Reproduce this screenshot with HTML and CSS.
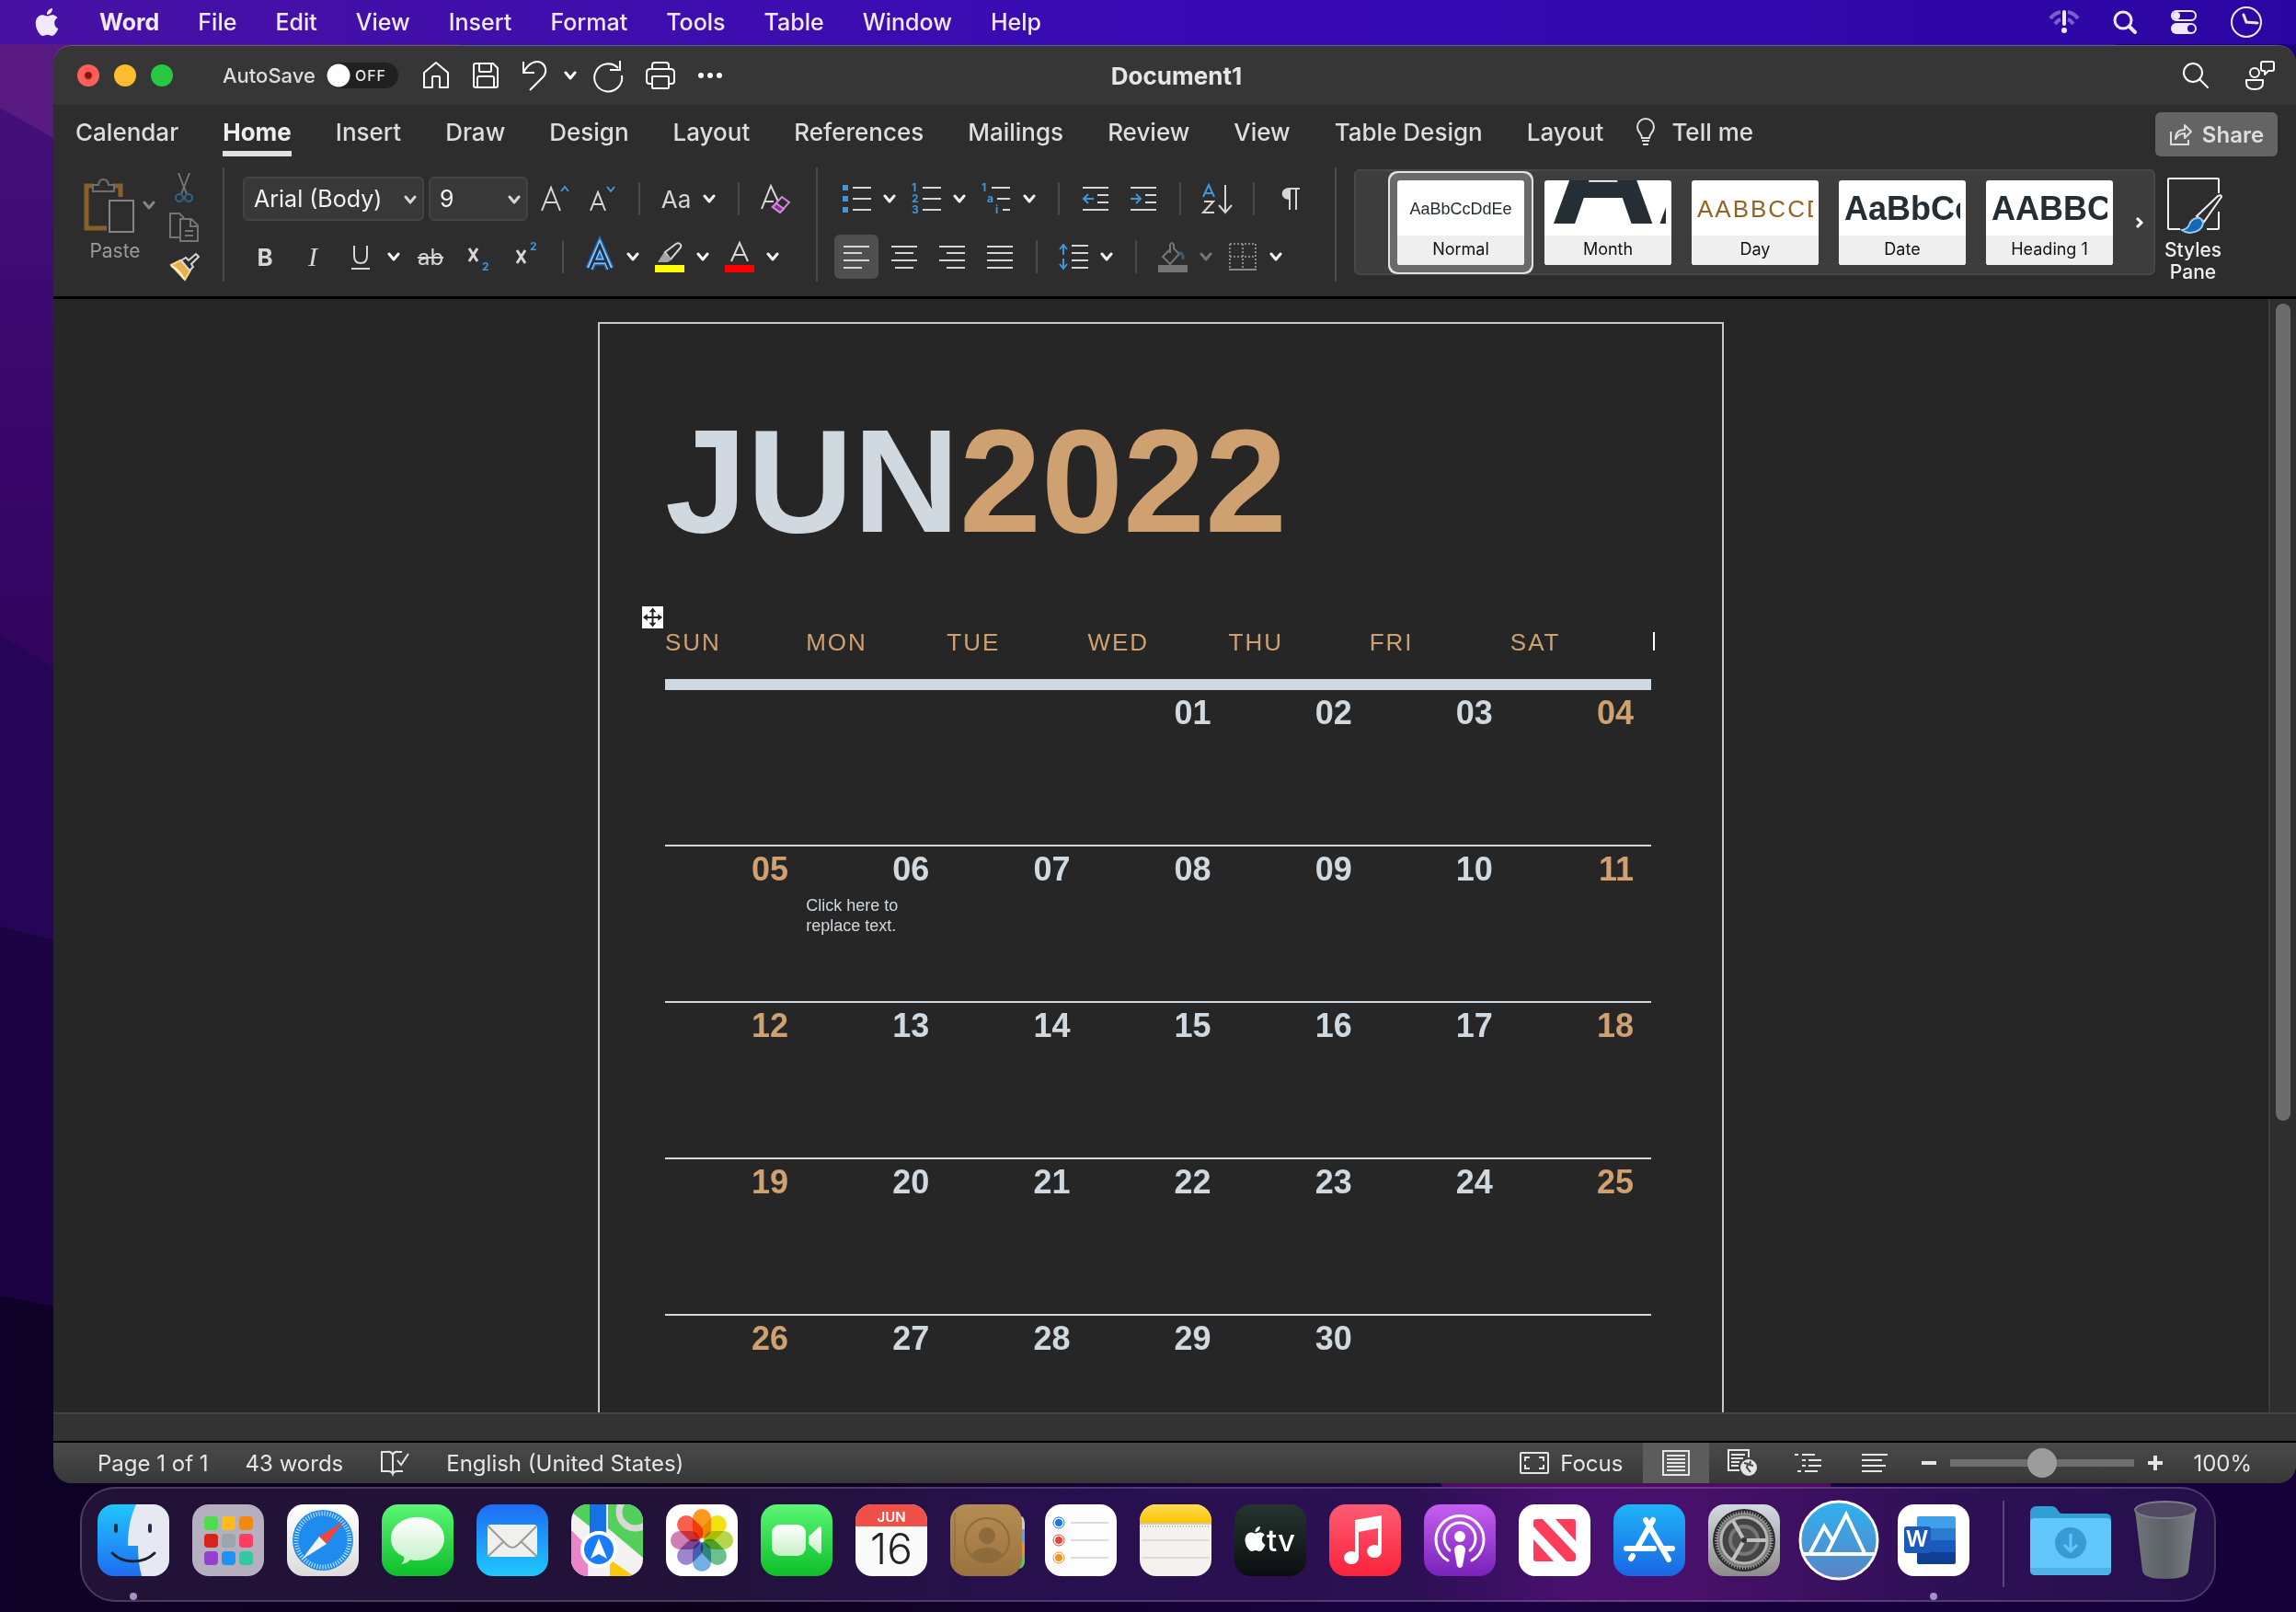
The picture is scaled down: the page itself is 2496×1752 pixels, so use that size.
FILE: index.html
```html
<!DOCTYPE html>
<html lang="en">
<head>
    <meta charset="UTF-8">
    <meta name="viewport" content="width=device-width, initial-scale=1.0">
    <title>Document1</title>
    <link rel="stylesheet" href="styles.css">
</head>
<body>
    <svg class="defs" width="0" height="0" aria-hidden="true">
        <symbol id="apple" viewBox="0 0 24 24"><path d="M12.152 6.896c-.948 0-2.415-1.078-3.96-1.04-2.04.027-3.91 1.183-4.961 3.014-2.117 3.675-.546 9.103 1.519 12.09 1.013 1.454 2.208 3.09 3.792 3.039 1.52-.065 2.09-.987 3.935-.987 1.831 0 2.35.987 3.96.948 1.637-.026 2.676-1.48 3.676-2.948 1.156-1.688 1.636-3.325 1.662-3.415-.039-.013-3.182-1.221-3.22-4.857-.026-3.04 2.48-4.494 2.597-4.559-1.429-2.09-3.623-2.324-4.39-2.376-2-.156-3.675 1.09-4.61 1.09zM15.53 3.83c.843-1.012 1.4-2.427 1.245-3.83-1.207.052-2.662.805-3.532 1.818-.78.896-1.454 2.338-1.273 3.714 1.338.104 2.715-.688 3.559-1.701"/></symbol>
        <symbol id="chev" viewBox="0 0 14 10"><path d="M2 2l5 6 5-6" fill="none" stroke="currentColor" stroke-width="3" stroke-linecap="round" stroke-linejoin="round"/></symbol>
        <linearGradient id="gBlue" x2="0" y2="1"><stop stop-color="#1fc6fd"/><stop offset="1" stop-color="#1f6df2"/></linearGradient>
        <linearGradient id="gMail" x2="0" y2="1"><stop stop-color="#1e6cf3"/><stop offset="1" stop-color="#1fc8fc"/></linearGradient>
        <linearGradient id="gStore" x2="0" y2="1"><stop stop-color="#1fb4f8"/><stop offset="1" stop-color="#1a66e4"/></linearGradient>
        <linearGradient id="gGreen" x2="0" y2="1"><stop stop-color="#5bf675"/><stop offset="1" stop-color="#0dbe29"/></linearGradient>
        <linearGradient id="gWhite" x2="0" y2="1"><stop stop-color="#ffffff"/><stop offset="1" stop-color="#dedcda"/></linearGradient>
        <linearGradient id="gBubble" x2="0" y2="1"><stop stop-color="#ffffff"/><stop offset="1" stop-color="#c4f0c6"/></linearGradient>
        <linearGradient id="gMusic" x2="0" y2="1"><stop stop-color="#fb5c74"/><stop offset="1" stop-color="#fa233b"/></linearGradient>
        <linearGradient id="gPod" x2="0" y2="1"><stop stop-color="#c65ff0"/><stop offset="1" stop-color="#7722ba"/></linearGradient>
        <linearGradient id="gTv" x2="0" y2="1"><stop stop-color="#25352f"/><stop offset="1" stop-color="#0b0e10"/></linearGradient>
        <linearGradient id="gBook" x2="0" y2="1"><stop stop-color="#b58d52"/><stop offset="1" stop-color="#9c723f"/></linearGradient>
        <linearGradient id="gNote" x2="0" y2="1"><stop stop-color="#fedc52"/><stop offset="1" stop-color="#fcc402"/></linearGradient>
        <linearGradient id="gGear" x2="0" y2="1"><stop stop-color="#d3dae2"/><stop offset="1" stop-color="#8f8c89"/></linearGradient>
        <linearGradient id="gPeak" x2="0" y2="1"><stop stop-color="#2fb2ef"/><stop offset="1" stop-color="#5b83c4"/></linearGradient>
        <linearGradient id="gTrash"><stop stop-color="#6e7478"/><stop offset=".5" stop-color="#5b6165"/><stop offset="1" stop-color="#7b8185"/></linearGradient>
        <clipPath id="tile"><rect width="78" height="78" rx="18"/></clipPath>
        <clipPath id="disc"><circle cx="39" cy="39" r="41"/></clipPath>
    </svg>

    <svg class="wallpaper" viewBox="0 0 2496 1752" preserveAspectRatio="none" aria-hidden="true">
        <defs>
            <linearGradient id="w1" x2="0" y2="1"><stop stop-color="#43107a"/><stop offset=".5" stop-color="#3a076c"/><stop offset="1" stop-color="#30045c"/></linearGradient>
            <linearGradient id="w2" x2="1" y2="0"><stop stop-color="#0e0127"/><stop offset=".3" stop-color="#0c0119"/><stop offset=".6" stop-color="#190240"/><stop offset="1" stop-color="#150038"/></linearGradient>
        </defs>
        <rect width="2496" height="160" fill="#591a82"/>
        <path d="M500 0h1996v110H500z" fill="#3013b4"/>
        <path d="M2300 0h196v1752h-196z" fill="#1d0579"/>
        <path d="M0 117l60 34V760H0z" fill="url(#w1)"/>
        <path d="M0 690l60 37v300H0z" fill="#260559"/>
        <path d="M0 1007l60 15v410H0z" fill="#1b0243"/>
        <path d="M0 1408l60 12h2436v332H0z" fill="url(#w2)"/>
        <path d="M1560 1600h430v20H1570z" fill="#4a0c66"/>
    </svg>

    <header class="menubar">
        <nav class="menus">
            <a href="#" class="apple" aria-label="Apple"><svg width="30" height="32"><use href="#apple"/></svg></a>
            <a href="#" class="app-name">Word</a>
            <a href="#">File</a>
            <a href="#">Edit</a>
            <a href="#">View</a>
            <a href="#">Insert</a>
            <a href="#">Format</a>
            <a href="#">Tools</a>
            <a href="#">Table</a>
            <a href="#">Window</a>
            <a href="#">Help</a>
        </nav>
        <div class="status-icons">
            <svg width="34" height="28" viewBox="0 0 34 28"><g stroke-width="4" opacity=".4"><path d="M2 10Q7 4 13 3M21 3q6 1 11 7"/><path d="M7 16q3-4 6-5M21 11q3 1 6 5"/></g><path d="M17 3v13" stroke-width="4" stroke-linecap="round"/><circle cx="17" cy="23" r="3" fill="currentColor" stroke="none"/></svg>
            <svg width="28" height="28" viewBox="0 0 28 28"><circle cx="12" cy="12" r="9" stroke-width="3"/><path d="M19 19l6 6" stroke-width="4" stroke-linecap="round"/></svg>
            <svg width="30" height="28" viewBox="0 0 30 28"><rect x="2" y="2" width="26" height="10" rx="5"/><circle cx="7" cy="7" r="4" fill="currentColor" stroke="none"/><rect x="1" y="15" width="28" height="12" rx="6" fill="currentColor" stroke="none"/><circle cx="23" cy="21" r="4" fill="#2f08a6" stroke="none"/></svg>
            <svg width="36" height="36" viewBox="0 0 36 36"><circle cx="18" cy="18" r="16"/><path d="M15 10l3 8 12 1" stroke-width="3" stroke-linecap="round"/></svg>
        </div>
    </header>

    <main class="window">
        <div class="titlebar">
            <div class="title-left">
                <div class="lights">
                    <button class="light close" aria-label="Close"></button>
                    <button class="light minimize" aria-label="Minimize"></button>
                    <button class="light zoom" aria-label="Zoom"></button>
                </div>
                <label class="autosave" for="autosave">AutoSave</label>
                <span class="switch"><input type="checkbox" id="autosave"><span class="switch-text">OFF</span></span>
                <div class="quick">
                    <button aria-label="Home"><svg width="32" height="34" viewBox="0 0 32 34"><path d="M3 14L16 3l13 11v16H20V19q0-1-1-1h-6q-1 0-1 1v11H3z" stroke-linejoin="round"/></svg></button>
                    <button aria-label="Save"><svg width="30" height="30" viewBox="0 0 30 30"><path d="M2 4q0-2 2-2h19l5 5v19q0 2-2 2H4q-2 0-2-2zM8 2v8q0 1 1 1h11q1 0 1-1V2M6 28V18q0-2 2-2h14q2 0 2 2v10"/></svg></button>
                    <button aria-label="Undo"><svg width="30" height="36" viewBox="0 0 30 36"><path d="M3 3v12h12M3 15C8 5 16 1 22 4c6 3 7 11 2 16L10 34"/></svg></button>
                    <button class="undo-more" aria-label="Undo options"><svg width="14" height="10"><use href="#chev"/></svg></button>
                    <button aria-label="Redo"><svg width="34" height="36" viewBox="0 0 34 36"><path d="M28 10a15 15 0 1 0 4 8M30 2v10H19"/></svg></button>
                    <button aria-label="Print"><svg width="34" height="32" viewBox="0 0 34 32"><path d="M8 9V5q0-3 3-3h12q3 0 3 3v4M8 25H5q-3 0-3-3V13q0-4 4-4h22q4 0 4 4v9q0 3-3 3h-3"/><rect x="8" y="17" width="18" height="13" rx="1"/></svg></button>
                    <button aria-label="More"><svg width="28" height="6" viewBox="0 0 28 6"><g fill="currentColor" stroke="none"><circle cx="4" cy="3" r="3"/><circle cx="14" cy="3" r="3"/><circle cx="24" cy="3" r="3"/></g></svg></button>
                </div>
            </div>
            <h2 class="doc-title">Document1</h2>
            <div class="title-right">
                <button aria-label="Search"><svg width="30" height="30" viewBox="0 0 30 30"><circle cx="12" cy="12" r="10"/><path d="M19 19l9 9" stroke-linecap="round"/></svg></button>
                <button aria-label="Presence"><svg width="34" height="34" viewBox="0 0 34 34"><circle cx="11" cy="14" r="5"/><path d="M2 22h18v3q0 7-9 7t-9-7zM20 2h10q2 0 2 2v6q0 2-2 2h-4l-4 4v-4h-2q-2 0-2-2V4q0-2 2-2z" stroke-linejoin="round"/></svg></button>
            </div>
        </div>

        <div class="tabs">
            <button class="tab">Calendar</button>
            <button class="tab active">Home</button>
            <button class="tab">Insert</button>
            <button class="tab">Draw</button>
            <button class="tab">Design</button>
            <button class="tab">Layout</button>
            <button class="tab">References</button>
            <button class="tab">Mailings</button>
            <button class="tab">Review</button>
            <button class="tab">View</button>
            <button class="tab">Table Design</button>
            <button class="tab">Layout</button>
            <button class="tab tell"><svg width="20" height="30" viewBox="0 0 20 30"><path d="M6 22c0-5-5-6-5-12a9 9 0 0 1 18 0c0 6-5 7-5 12zM6 25h8M7 29h6"/></svg>Tell me</button>
            <button class="share"><svg width="26" height="26" viewBox="0 0 26 26"><path d="M2 10v14h19v-5M7 18c0-7 4-10 10-10V3l7 7-7 7v-5c-5 0-8 2-10 6z" stroke-linejoin="round"/></svg>Share</button>
        </div>

        <div class="ribbon">
            <div class="clipboard">
                <button class="paste">
                    <span class="paste-icon">
                        <svg width="54" height="62" viewBox="0 0 54 62"><path d="M24 56H2V10h7M31 10h8v12" stroke="#8a5f2c" stroke-width="5"/><path d="M9 16V9h6c1-8 10-8 11 0h6v7z" stroke="#6f6f6f"/><path d="M27 26h26v34H27z" stroke="#858585"/></svg>
                        <svg width="14" height="10"><use href="#chev"/></svg>
                    </span>
                    <span class="paste-label">Paste</span>
                </button>
                <div class="clip-tools">
                    <button class="dim" aria-label="Cut"><svg width="22" height="34" viewBox="0 0 22 34"><path d="M5 2l9 23M17 2L8 25"/><g stroke="#31658c"><circle cx="6" cy="29" r="4"/><circle cx="16" cy="29" r="4"/></g></svg></button>
                    <button class="dim" aria-label="Copy"><svg width="34" height="34" viewBox="0 0 34 34"><path d="M12 28H2V2h10l5 5M13 8h12l7 7v17H13zM24 8v8h8M18 21h9M18 26h9"/></svg></button>
                    <button aria-label="Format painter"><svg width="34" height="32" viewBox="0 0 34 32"><path d="M3 14l10-5 11 11-6 10z" fill="#e9b04a" stroke="#f6d48a"/><path d="M3 15q8 3 14 14" stroke="#fff3d0"/><path d="M14 9l5-3 3 3 8-7 3 3-8 8 2 3-4 4z" fill="#2d2d2d"/></svg></button>
                </div>
            </div>

            <div class="group font-group">
                <div class="row">
                    <span class="drop drop-font"><select aria-label="Font"><option>Arial (Body)</option></select><svg width="14" height="10"><use href="#chev"/></svg></span>
                    <span class="drop drop-size"><select aria-label="Font size"><option>9</option></select><svg width="14" height="10"><use href="#chev"/></svg></span>
                    <button class="tool" aria-label="Grow font"><svg width="32" height="32" viewBox="0 0 32 32"><path d="M2 29L12 4l10 25M6 20h12"/><path d="M23 8l4-5 4 5" class="blue"/></svg></button>
                    <button class="tool" aria-label="Shrink font"><svg width="30" height="32" viewBox="0 0 30 32"><path d="M2 29L10 9l8 20M5 22h10"/><path d="M20 3l4 5 4-5" class="blue"/></svg></button>
                    <i class="sep"></i>
                    <button class="tool case">Aa</button>
                    <button class="chev" aria-label="Change case"><svg width="14" height="10"><use href="#chev"/></svg></button>
                    <i class="sep"></i>
                    <button class="tool" aria-label="Clear formatting"><svg width="34" height="34" viewBox="0 0 34 34"><path d="M2 28L12 3l8 17M6 20h9"/><path d="M14 26l10-11 8 6-10 11z" fill="#2d2d2d" stroke="#d08ad8"/><path d="M14 26l4-4 8 6-4 4z" fill="#8a2f96" stroke="#d08ad8"/></svg></button>
                </div>
                <div class="row row-pad">
                    <button class="tool bold">B</button>
                    <button class="tool italic">I</button>
                    <button class="tool" aria-label="Underline"><svg width="24" height="28" viewBox="0 0 24 28"><path d="M5 2v11q0 8 7 8t7-8V2M2 27h20"/></svg></button>
                    <button class="chev" aria-label="Underline style"><svg width="14" height="10"><use href="#chev"/></svg></button>
                    <button class="tool strike">ab</button>
                    <button class="tool" aria-label="Subscript"><svg width="26" height="32" viewBox="0 0 26 32"><path d="M3 7l9 14M12 7L3 21" stroke-width="3"/><text x="17" y="31" class="num">2</text></svg></button>
                    <button class="tool" aria-label="Superscript"><svg width="26" height="32" viewBox="0 0 26 32"><path d="M3 9l9 14M12 9L3 23" stroke-width="3"/><text x="17" y="9" class="num">2</text></svg></button>
                    <i class="sep"></i>
                    <button class="tool" aria-label="Text effects"><svg width="32" height="32" viewBox="0 0 32 32"><path d="M5 29L16 4l11 25M9 21h14" stroke="#1f6fc0" stroke-width="9"/><path d="M5 29L16 4l11 25M9 21h14" stroke="#8cc6f4" stroke-width="6"/><path d="M5 30L16 4l11 26M9 21h14" stroke="#1b3550" stroke-width="3"/></svg></button>
                    <button class="chev" aria-label="Text effect options"><svg width="14" height="10"><use href="#chev"/></svg></button>
                    <button class="tool" aria-label="Highlight"><svg width="34" height="34" viewBox="0 0 34 34"><path d="M12 12L24 3q3-2 5 1 1 2-1 4L18 20z" stroke-width="2"/><path d="M11 12l8 8-4 3H4z" fill="#a5a5a5" stroke="none"/><path d="M1 26h32v8H1z" fill="#ffff00" stroke="none"/></svg></button>
                    <button class="chev" aria-label="Highlight colour"><svg width="14" height="10"><use href="#chev"/></svg></button>
                    <button class="tool" aria-label="Font colour"><svg width="34" height="34" viewBox="0 0 34 34"><path d="M8 22L17 2l9 20M11 15h12"/><path d="M1 26h32v8H1z" fill="#ff0000" stroke="none"/></svg></button>
                    <button class="chev" aria-label="Font colour options"><svg width="14" height="10"><use href="#chev"/></svg></button>
                </div>
            </div>

            <div class="group para-group">
                <div class="row">
                    <button class="tool" aria-label="Bullets"><svg width="32" height="32" viewBox="0 0 32 32"><path d="M12 4h20M12 16h20M12 28h20"/><path d="M1 1h6v6H1zM1 13h6v6H1zM1 25h6v6H1z" fill="#3f97d9" stroke="none"/></svg></button>
                    <button class="chev" aria-label="Bullet options"><svg width="14" height="10"><use href="#chev"/></svg></button>
                    <button class="tool" aria-label="Numbering"><svg width="32" height="32" viewBox="0 0 32 32"><path d="M12 4h20M12 16h20M12 28h20"/><text x="0" y="8" class="num">1</text><text x="0" y="20" class="num">2</text><text x="0" y="32" class="num">3</text></svg></button>
                    <button class="chev" aria-label="Number options"><svg width="14" height="10"><use href="#chev"/></svg></button>
                    <button class="tool" aria-label="Multilevel list"><svg width="32" height="32" viewBox="0 0 32 32"><path d="M11 4h20M17 16h14M23 28h8"/><text x="0" y="8" class="num">1</text><text x="6" y="20" class="num">a</text><text x="15" y="32" class="num">i</text></svg></button>
                    <button class="chev" aria-label="Multilevel options"><svg width="14" height="10"><use href="#chev"/></svg></button>
                    <i class="sep"></i>
                    <button class="tool" aria-label="Decrease indent"><svg width="30" height="28" viewBox="0 0 30 28"><path d="M1 2h28M17 10h12M17 18h12M1 26h28"/><path d="M13 14H2M7 9l-5 5 5 5" class="blue"/></svg></button>
                    <button class="tool" aria-label="Increase indent"><svg width="30" height="28" viewBox="0 0 30 28"><path d="M1 2h28M17 10h12M17 18h12M1 26h28"/><path d="M1 14h11M7 9l5 5-5 5" class="blue"/></svg></button>
                    <i class="sep"></i>
                    <button class="tool" aria-label="Sort"><svg width="34" height="34" viewBox="0 0 34 34"><path d="M2 15L8 2l6 13M4 11h8" class="blue"/><path d="M3 20h10L2 32h12M26 2v29M19 24l7 8 7-8"/></svg></button>
                    <i class="sep"></i>
                    <button class="tool" aria-label="Show marks"><svg width="22" height="26" viewBox="0 0 22 26"><path d="M9 2h12M10 2v23M17 2v23"/><path d="M10 1C-1 1-1 14 10 14z" fill="currentColor" stroke="none"/></svg></button>
                </div>
                <div class="row">
                    <button class="tool selected" aria-label="Align left"><svg width="28" height="28" viewBox="0 0 28 28"><path d="M0 3h28M0 10h20M0 18h28M0 26h20"/></svg></button>
                    <button class="tool" aria-label="Align center"><svg width="28" height="28" viewBox="0 0 28 28"><path d="M0 3h28M4 10h20M0 18h28M4 26h20"/></svg></button>
                    <button class="tool" aria-label="Align right"><svg width="28" height="28" viewBox="0 0 28 28"><path d="M0 3h28M8 10h20M0 18h28M8 26h20"/></svg></button>
                    <button class="tool" aria-label="Justify"><svg width="28" height="28" viewBox="0 0 28 28"><path d="M0 3h28M0 10h28M0 18h28M0 26h28"/></svg></button>
                    <i class="sep"></i>
                    <button class="tool" aria-label="Line spacing"><svg width="34" height="30" viewBox="0 0 34 30"><path d="M15 3h18M15 11h18M15 19h18M15 27h18"/><path d="M6 13V3M2 7l4-5 4 5M6 17v11M2 23l4 5 4-5" class="blue"/></svg></button>
                    <button class="chev" aria-label="Spacing options"><svg width="14" height="10"><use href="#chev"/></svg></button>
                    <i class="sep"></i>
                    <button class="tool dim" aria-label="Shading"><svg width="34" height="34" viewBox="0 0 34 34"><path d="M14 9L6 17l8 8 10-11-6-6V4q-2-4-4 0v9"/><path d="M24 12q5 2 4 8" stroke="#3c5a72" stroke-width="3"/><path d="M1 26h32v8H1z" fill="#757575" stroke="none"/></svg></button>
                    <button class="chev dim" aria-label="Shading options"><svg width="14" height="10"><use href="#chev"/></svg></button>
                    <button class="tool borders" aria-label="Borders"><svg width="30" height="32" viewBox="0 0 30 32"><path d="M1 2h28M1 16h28M1 2v27M15 2v27M29 2v27" stroke-dasharray="2 2"/><path d="M0 30h30"/></svg></button>
                    <button class="chev" aria-label="Border options"><svg width="14" height="10"><use href="#chev"/></svg></button>
                </div>
            </div>

            <div class="group style-group">
                <div class="gallery">
                    <button class="card current"><span class="preview p-normal">AaBbCcDdEe</span><span class="card-name">Normal</span></button>
                    <button class="card"><span class="preview p-month">AA</span><span class="card-name">Month</span></button>
                    <button class="card"><span class="preview p-day">AABBCCD</span><span class="card-name">Day</span></button>
                    <button class="card"><span class="preview p-date">AaBbCc</span><span class="card-name">Date</span></button>
                    <button class="card"><span class="preview p-date">AABBC</span><span class="card-name">Heading 1</span></button>
                    <button class="more" aria-label="More styles"><svg width="10" height="14" viewBox="0 0 10 14"><path d="M2 2l5 5-5 5" stroke-width="3"/></svg></button>
                </div>
                <button class="styles-pane"><svg width="62" height="62" viewBox="0 0 62 62"><path d="M15 57H3q-1 0-1-1V3q0-1 1-1h53q1 0 1 1v15M57 38v18q0 1-1 1H44" stroke-width="2"/><path d="M33 43l23-22q4-2 4 1L41 49z"/><path d="M33 45q5-1 7 5-1 10-15 11-4 0-8-3 6-1 8-6 2-6 8-7z" fill="#1767b8" stroke="#9ccbf2"/></svg>Styles<br>Pane</button>
            </div>
        </div>

        <div class="document">
            <div class="canvas">
                <article class="page">
                    <h1>JUN<span>2022</span></h1>
                    <div class="calendar">
                        <span class="handle"><svg width="23" height="24" viewBox="0 0 24 24"><path d="M12 4v16M4 12h16"/><path d="M12 1l4 5H8zM12 23l4-5H8zM1 12l5-4v8zM23 12l-5-4v8z" fill="currentColor" stroke="none"/></svg></span>
                        <span class="caret"></span>
                        <table>
                            <thead>
                                <tr><th>SUN</th><th>MON</th><th>TUE</th><th>WED</th><th>THU</th><th>FRI</th><th>SAT</th></tr>
                            </thead>
                            <tbody>
                                <tr><td></td><td></td><td></td><td>01</td><td>02</td><td>03</td><td>04</td></tr>
                                <tr><td>05</td><td>06<p>Click here to replace text.</p></td><td>07</td><td>08</td><td>09</td><td>10</td><td>11</td></tr>
                                <tr><td>12</td><td>13</td><td>14</td><td>15</td><td>16</td><td>17</td><td>18</td></tr>
                                <tr><td>19</td><td>20</td><td>21</td><td>22</td><td>23</td><td>24</td><td>25</td></tr>
                                <tr><td>26</td><td>27</td><td>28</td><td>29</td><td>30</td><td></td><td></td></tr>
                            </tbody>
                        </table>
                    </div>
                </article>
            </div>
            <div class="vscroll"><div class="thumb"></div></div>
        </div>
        <div class="hscroll"></div>

        <footer class="statusbar">
            <span>Page 1 of 1</span>
            <span>43 words</span>
            <svg width="32" height="28" viewBox="0 0 32 28"><path d="M14 26V5q-2-4-6-3H2v21h7q4 0 5 3 1-3 5-3h6M14 5q2-4 6-3h4M19 11l4 5 8-12"/></svg>
            <span>English (United States)</span>
            <div class="view-tools">
                <button class="focus"><svg width="32" height="24" viewBox="0 0 32 24"><rect x="1" y="1" width="30" height="22" rx="1"/><path d="M6 10V6h5M21 6h5v4M26 14v4h-5M11 18H6v-4"/></svg>Focus</button>
                <button class="view on" aria-label="Print layout"><svg width="30" height="28" viewBox="0 0 30 28"><path d="M1 1h28v26H1zM5 6h20M5 10h20M5 14h20M5 18h20M5 22h20"/></svg></button>
                <button class="view" aria-label="Web layout"><svg width="34" height="30" viewBox="0 0 34 30"><path d="M14 23H2V1h22v8M5 6h15M5 10h13M5 14h9M5 18h8"/><circle cx="24" cy="20" r="9" fill="currentColor" stroke="none"/><path d="M19 15l4 1-1 4 4 5M26 13l-1 4 4 1" stroke="#444"/></svg></button>
                <button class="view" aria-label="Outline"><svg width="32" height="22" viewBox="0 0 32 22"><path d="M1 2h4M9 2h14M9 8h4M16 8h14M9 14h4M16 14h14M4 20h4M12 20h14"/></svg></button>
                <button class="view" aria-label="Draft"><svg width="28" height="22" viewBox="0 0 28 22"><path d="M0 2h28M0 8h22M0 14h26M0 20h22"/></svg></button>
                <button class="step" aria-label="Zoom out"><svg width="18" height="18" viewBox="0 0 18 18"><path d="M1 9h16" stroke-width="4"/></svg></button>
                <input type="range" class="zoom-range" min="0" max="100" value="50" aria-label="Zoom">
                <button class="step" aria-label="Zoom in"><svg width="18" height="18" viewBox="0 0 18 18"><path d="M1 9h16M9 1v16" stroke-width="4"/></svg></button>
                <span class="percent">100%</span>
            </div>
        </footer>
    </main>

    <nav class="dock">
        <a href="#" class="running" aria-label="Finder"><svg viewBox="0 0 78 78"><g clip-path="url(#tile)"><rect width="78" height="78" fill="url(#gBlue)"/><path d="M42 0c-7 15-9 30-9 45h11c0 12 1 22 4 33h30V0z" fill="#e6e9f1"/></g><path d="M20 23v6M57 23v6" stroke="#20304a" stroke-width="4" stroke-linecap="round"/><path d="M16 53c12 12 34 12 46 0" fill="none" stroke="#14202e" stroke-width="3" stroke-linecap="round"/></svg></a>
        <a href="#" aria-label="Launchpad"><svg viewBox="0 0 78 78"><rect width="78" height="78" rx="18" fill="#b5b0c0"/><rect x="13" y="13" width="15" height="15" rx="4" fill="#4fdc4a"/><rect x="32" y="13" width="15" height="15" rx="4" fill="#fcbd1c"/><rect x="51" y="13" width="15" height="15" rx="4" fill="#f28a12"/><rect x="13" y="32" width="15" height="15" rx="4" fill="#d8231c"/><rect x="32" y="32" width="15" height="15" rx="4" fill="#9aa5ad"/><rect x="51" y="32" width="15" height="15" rx="4" fill="#fb3f63"/><rect x="13" y="51" width="15" height="15" rx="4" fill="#9340cf"/><rect x="32" y="51" width="15" height="15" rx="4" fill="#1f93f5"/><rect x="51" y="51" width="15" height="15" rx="4" fill="#35c8a0"/></svg></a>
        <a href="#" aria-label="Safari"><svg viewBox="0 0 78 78"><rect width="78" height="78" rx="18" fill="url(#gWhite)"/><circle cx="39" cy="39" r="33" fill="#1e8bee"/><circle cx="39" cy="39" r="29" fill="none" stroke="#d8ecff" stroke-width="5" stroke-dasharray="1 2"/><path d="M62 18L43 43l-8-8z" fill="#f0453c"/><path d="M16 60l19-25 8 8z" fill="#f4f4f4"/></svg></a>
        <a href="#" aria-label="Messages"><svg viewBox="0 0 78 78"><rect width="78" height="78" rx="18" fill="url(#gGreen)"/><path d="M39 14c17 0 29 10 29 23S56 61 39 61c-3 0-6 0-8-1-2 3-5 4-10 5 3-3 4-5 3-8C15 53 10 46 10 37c0-13 12-23 29-23z" fill="url(#gBubble)"/></svg></a>
        <a href="#" aria-label="Mail"><svg viewBox="0 0 78 78"><rect width="78" height="78" rx="18" fill="url(#gMail)"/><rect x="12" y="22" width="54" height="35" rx="4" fill="#f0f0ee"/><path d="M13 24l20 20q6 6 12 0l20-20M13 56l17-16M65 56L48 40" fill="none" stroke="#9b9b9b" stroke-width="2"/></svg></a>
        <a href="#" aria-label="Maps"><svg viewBox="0 0 78 78"><g clip-path="url(#tile)"><rect width="78" height="78" fill="#f3f2f0"/><path d="M0 0h20v24L0 8zM40 0h38v58L40 26z" fill="#53cf5b"/><path d="M0 28l18 18v32H0z" fill="#ea86c8"/><path d="M42 60l26 18H42z" fill="#fcc90a"/><path d="M20 0h18v50H20z" fill="#1670e8"/><circle cx="70" cy="8" r="18" fill="none" stroke="#d9d8d6" stroke-width="7"/></g><circle cx="30" cy="49" r="18" fill="#1a7cf8" stroke="#fff" stroke-width="4"/><path d="M30 37l9 22-9-5-9 5z" fill="#fff"/></svg></a>
        <a href="#" aria-label="Photos"><svg viewBox="0 0 78 78"><rect width="78" height="78" rx="18" fill="#fff"/><g class="petals"><rect x="29" y="5" width="20" height="32" rx="10" fill="#fb9a1f"/><rect x="29" y="5" width="20" height="32" rx="10" fill="#f2e211" transform="rotate(45 39 39)"/><rect x="29" y="5" width="20" height="32" rx="10" fill="#b5d64a" transform="rotate(90 39 39)"/><rect x="29" y="5" width="20" height="32" rx="10" fill="#6cc08b" transform="rotate(135 39 39)"/><rect x="29" y="5" width="20" height="32" rx="10" fill="#6fb1e6" transform="rotate(180 39 39)"/><rect x="29" y="5" width="20" height="32" rx="10" fill="#9b87cc" transform="rotate(225 39 39)"/><rect x="29" y="5" width="20" height="32" rx="10" fill="#d07fb4" transform="rotate(270 39 39)"/><rect x="29" y="5" width="20" height="32" rx="10" fill="#fb604e" transform="rotate(315 39 39)"/></g></svg></a>
        <a href="#" aria-label="FaceTime"><svg viewBox="0 0 78 78"><rect width="78" height="78" rx="18" fill="url(#gGreen)"/><rect x="12" y="22" width="37" height="34" rx="9" fill="url(#gBubble)"/><path d="M52 35l11-10q3-2 3 2v24q0 4-3 2L52 43z" fill="url(#gBubble)"/></svg></a>
        <a href="#" aria-label="Calendar"><svg viewBox="0 0 78 78"><rect width="78" height="78" rx="18" fill="#fafafa"/><path d="M0 24v-6A18 18 0 0 1 18 0h42a18 18 0 0 1 18 18v6z" fill="#ef5148"/><text x="39" y="19" class="cal-month">JUN</text><text x="39" y="65" class="cal-day">16</text></svg></a>
        <a href="#" aria-label="Contacts"><svg viewBox="0 0 78 78"><path d="M70 10q11 2 11 10v9H70z" fill="#c9c9cf"/><path d="M70 27h11v16H70z" fill="#4fa9e8"/><path d="M70 42h11v14H70z" fill="#f5901f"/><path d="M70 55h11v8q-1 6-6 7z" fill="#54cd5b"/><rect width="78" height="78" rx="18" fill="url(#gBook)"/><path d="M5 9v60" stroke="#8d6a38" stroke-width="1"/><g fill="#8e6b3b"><circle cx="40" cy="39" r="24" fill="none" stroke="#8e6b3b" stroke-width="2"/><circle cx="40" cy="34" r="9"/><path d="M23 55q5-8 17-8t17 8q-7 8-17 8t-17-8z"/></g></svg></a>
        <a href="#" aria-label="Reminders"><svg viewBox="0 0 78 78"><rect width="78" height="78" rx="18" fill="#fdfdfd"/><path d="M28 20h41M28 39h41M28 58h41" stroke="#bdbdbf" stroke-width="1"/><g stroke-width="1"><circle cx="15" cy="20" r="6" fill="none" stroke="#1a75e8"/><circle cx="15" cy="39" r="6" fill="none" stroke="#e8443a"/><circle cx="15" cy="58" r="6" fill="none" stroke="#f0941c"/></g><circle cx="15" cy="20" r="4" fill="#1a75e8"/><circle cx="15" cy="39" r="4" fill="#e8443a"/><circle cx="15" cy="58" r="4" fill="#f0941c"/></svg></a>
        <a href="#" aria-label="Notes"><svg viewBox="0 0 78 78"><rect width="78" height="78" rx="18" fill="#f4f2ef"/><path d="M0 20v-2A18 18 0 0 1 18 0h42a18 18 0 0 1 18 18v2z" fill="url(#gNote)"/><path d="M0 21h78" stroke="#a9a18a" stroke-width="1"/><path d="M2 24h74" stroke="#bab7b0" stroke-width="2" stroke-dasharray="1 2"/><path d="M2 39h74M2 58h74" stroke="#c8c5c0" stroke-width="1"/></svg></a>
        <a href="#" aria-label="TV"><svg viewBox="0 0 78 78"><rect width="78" height="78" rx="18" fill="url(#gTv)"/><use href="#apple" x="9" y="24" width="27" height="27" fill="#fff"/><text x="35" y="51" class="tv">tv</text></svg></a>
        <a href="#" aria-label="Music"><svg viewBox="0 0 78 78"><rect width="78" height="78" rx="18" fill="url(#gMusic)"/><path d="M28 17l29-5v40a8 7 0 1 1-4-7V26l-21 4v28a8 7 0 1 1-4-6z" fill="#fff"/></svg></a>
        <a href="#" aria-label="Podcasts"><svg viewBox="0 0 78 78"><rect width="78" height="78" rx="18" fill="url(#gPod)"/><g fill="none" stroke="#fff" stroke-width="3" stroke-linecap="round"><path d="M26 61a26 26 0 1 1 26 0"/><path d="M28 50a17 17 0 1 1 22 0"/></g><circle cx="39" cy="35" r="6" fill="#fff"/><path d="M33 50c0-8 12-8 12 0l-3 17q-3 4-6 0z" fill="#fff"/></svg></a>
        <a href="#" aria-label="News"><svg viewBox="0 0 78 78"><rect width="78" height="78" rx="18" fill="#fff"/><path d="M16 19q0-3 3-3h7l36 38v5q0 3-3 3h-7L16 24z" fill="#fb3d5c"/><path d="M40 16h19q3 0 3 3v21zM16 38v21q0 3 3 3h19z" fill="#fb3d5c"/></svg></a>
        <a href="#" aria-label="App Store"><svg viewBox="0 0 78 78"><rect width="78" height="78" rx="18" fill="url(#gStore)"/><path d="M43 17L26 47M35 17l25 43M14 48h30M54 48h10M21 56l-2 3" fill="none" stroke="#fff" stroke-width="6" stroke-linecap="round"/></svg></a>
        <a href="#" aria-label="System Preferences"><svg viewBox="0 0 78 78"><rect width="78" height="78" rx="18" fill="url(#gGear)"/><circle cx="39" cy="39" r="34" fill="#2b2b2b"/><circle cx="39" cy="39" r="30" fill="#777" stroke="#a8a8a8" stroke-width="4" stroke-dasharray="1 2"/><circle cx="39" cy="39" r="25" fill="#444" stroke="#b5b5b5" stroke-width="3"/><circle cx="39" cy="39" r="15" fill="#4f4f4f" stroke="#777" stroke-width="4"/><path d="M39 39h24M39 39L27 18M39 39L27 60" stroke="#c0c0c0" stroke-width="4"/><circle cx="39" cy="39" r="3" fill="#333"/></svg></a>
        <a href="#" aria-label="Peaks"><svg viewBox="0 0 78 78"><g clip-path="url(#disc)"><circle cx="39" cy="39" r="43" fill="url(#gPeak)"/><path d="M-4 54h86M8 53l15-29 9 15M26 53l21-42 20 42" fill="none" stroke="#fff" stroke-width="4"/></g><circle cx="39" cy="39" r="42" fill="none" stroke="#fff" stroke-width="3"/></svg></a>
        <a href="#" class="running" aria-label="Word"><svg viewBox="0 0 78 78"><rect width="78" height="78" rx="18" fill="#fff"/><path d="M23 13h38q2 0 2 2v11H21V15q0-2 2-2z" fill="#41a0ea"/><path d="M21 26h42v13H21z" fill="#2b7bd3"/><path d="M21 39h42v13H21z" fill="#185abd"/><path d="M21 52h42v11q0 2-2 2H23q-2 0-2-2z" fill="#103f91"/><rect x="7" y="24" width="29" height="29" rx="3" fill="#1c59bb"/><text x="21" y="46" class="w">W</text></svg></a>
        <i class="dock-line"></i>
        <a href="#" class="folder" aria-label="Downloads"><svg viewBox="0 0 88 78"><path d="M0 10q0-8 7-8h16q4 0 6 3l3 4q1 1 4 1h46q6 0 6 6v20H0z" fill="#2f9fd6"/><path d="M0 20q0-5 5-5h78q5 0 5 5v51q0 6-6 6H6q-6 0-6-6z" fill="#62c8fb"/><path d="M0 69h88v2q0 6-6 6H6q-6 0-6-6z" fill="#4fb2e6"/><circle cx="44" cy="42" r="17" fill="#3a9ad6"/><path d="M44 32v19M37 44l7 7 7-7" fill="none" stroke="#62c8fb" stroke-width="3"/></svg></a>
        <a href="#" class="trash" aria-label="Trash"><svg viewBox="0 0 68 86"><path d="M1 10l8 66q1 9 25 9t25-9l8-66z" fill="url(#gTrash)"/><ellipse cx="34" cy="10" rx="33" ry="9" fill="#514b62" stroke="#7c7a88" stroke-width="2"/></svg></a>
    </nav>
</body>
</html>
```

FILE: styles.css
```css
* {
    box-sizing: border-box;
}

body {
    margin: 0;
    height: 100vh;
    display: flex;
    flex-direction: column;
    overflow: hidden;
    background-color: #150038;
    font-family: Inter, "Liberation Sans", sans-serif;
    font-size: 24px;
    color: #e6e6e6;
}

button {
    margin: 0;
    padding: 0;
    border: none;
    background: none;
    color: inherit;
    font: inherit;
}

a {
    color: inherit;
    text-decoration: none;
}

svg {
    display: block;
    flex: none;
    overflow: visible;
    fill: none;
    stroke: currentColor;
    stroke-width: 2;
}

.defs {
    position: absolute;
}

.wallpaper {
    position: absolute;
    z-index: -1;
    width: 100%;
    height: 100%;
    stroke: none;
}

/* menu bar */
.menubar {
    flex: none;
    height: 48px;
    padding: 0 36px 0 36px;
    display: flex;
    justify-content: space-between;
    align-items: center;
    background: linear-gradient(90deg, #4811a4, #3c0db0 35%, #3609b4 55%, #2c06a2);
    color: #efe9fb;
    font-size: 25px;
    font-weight: 500;
}

.menus,
.status-icons {
    display: flex;
    align-items: center;
}

.menus {
    gap: 42px;
}

.menus svg {
    fill: currentColor;
    stroke: none;
}

.app-name {
    font-weight: 700;
}

.status-icons {
    gap: 35px;
}

/* window */
.window {
    flex: 1;
    min-height: 0;
    margin: 2px 0 4px 58px;
    display: flex;
    flex-direction: column;
    overflow: hidden;
    border-radius: 20px;
    background-color: #2d2d2d;
    box-shadow: 0 -1px 0 #6b5a78;
}

.titlebar {
    flex: none;
    height: 64px;
    padding: 0 22px 0 26px;
    display: grid;
    grid-template-columns: 1fr auto 1fr;
    align-items: center;
    background-color: #363636;
}

.title-left,
.title-right,
.lights,
.quick {
    display: flex;
    align-items: center;
}

.lights {
    gap: 16px;
}

.light {
    width: 24px;
    height: 24px;
    border-radius: 50%;
}

.close {
    background: radial-gradient(circle, #8c0d0a 3px, #fe5f58 5px);
}

.minimize {
    background-color: #febc2e;
}

.zoom {
    background-color: #28c840;
}

.autosave {
    margin-left: 54px;
    font-size: 22px;
    font-weight: 500;
    color: #dcdcdc;
}

.switch {
    position: relative;
    margin-left: 12px;
}

.switch input {
    display: block;
    appearance: none;
    width: 78px;
    height: 28px;
    margin: 0;
    border-radius: 14px;
    background: radial-gradient(circle at 13px 14px, #ffffff 12px, #202020 13px);
}

.switch-text {
    position: absolute;
    top: 0;
    left: 31px;
    line-height: 28px;
    font-size: 16px;
    font-weight: 500;
    letter-spacing: 1px;
    pointer-events: none;
}

.quick {
    margin-left: 25px;
    gap: 23px;
    color: #ffffff;
}

.undo-more {
    margin: 0 -6px;
}

.doc-title {
    margin: 0;
    font-size: 26px;
    font-weight: 700;
}

.title-right {
    justify-content: flex-end;
    gap: 38px;
    color: #ffffff;
}

/* ribbon tabs */
.tabs {
    flex: none;
    height: 58px;
    padding: 0 20px 0 24px;
    display: flex;
    gap: 48px;
    font-size: 26px;
    font-weight: 500;
    color: #dedede;
}

.tab {
    height: 56px;
    padding-top: 8px;
    border-bottom: 6px solid transparent;
    white-space: nowrap;
}

.tab.active {
    font-weight: 700;
    border-image: linear-gradient(#e0e0e0, #e0e0e0) 1;
    color: #eeeeee;
}

.tell {
    display: flex;
    align-items: center;
    gap: 18px;
    margin-left: -12px;
}

.share {
    width: 133px;
    height: 48px;
    margin: 8px 0 0 auto;
    display: flex;
    align-items: center;
    justify-content: center;
    gap: 10px;
    border-radius: 6px;
    background-color: #646464;
    font-weight: 600;
    font-size: 24px;
}

/* ribbon */
.ribbon {
    flex: none;
    height: 153px;
    padding-top: 10px;
    display: flex;
    align-items: flex-start;
    border-bottom: 3px solid #000000;
    color: #d6d6d6;
}

.clipboard {
    width: 184px;
    padding: 4px 0 0 34px;
    display: flex;
    align-items: flex-start;
    gap: 14px;
}

.paste {
    color: #9a9a9a;
    font-size: 21px;
}

.paste-icon {
    display: flex;
    align-items: center;
    gap: 9px;
    margin-top: 6px;
    margin-bottom: 6px;
    color: #858585;
}

.paste-label {
    display: block;
    width: 66px;
    text-align: center;
}

.clip-tools {
    display: flex;
    flex-direction: column;
    align-items: center;
    gap: 10px;
}

.clip-tools svg {
    margin: 0 auto;
}

.dim {
    color: #757575;
}

.group {
    height: 124px;
    padding-top: 10px;
    border-left: 2px solid #4a4a4a;
}

.font-group {
    width: 645px;
    padding-left: 20px;
}

.para-group {
    width: 564px;
    padding-left: 24px;
}

.row {
    height: 48px;
    margin-bottom: 15px;
    display: flex;
    align-items: center;
}

.row-pad {
    padding-left: 6px;
}

.tool {
    width: 36px;
    height: 48px;
    display: flex;
    align-items: center;
    justify-content: center;
}

.tool + .tool {
    margin-left: 16px;
}

.chev {
    width: 20px;
    height: 48px;
    margin-left: 8px;
    display: flex;
    align-items: center;
    justify-content: center;
    color: #f4f4f4;
}

.chev.dim {
    color: #757575;
}

.chev + .tool {
    margin-left: 12px;
}

.sep {
    width: 2px;
    height: 36px;
    margin: 0 21px;
    background-color: #4a4a4a;
}

.blue {
    stroke: #3f97d9;
}

.num {
    fill: #3f97d9;
    stroke: none;
    font-size: 12px;
    font-weight: 700;
}

.drop {
    position: relative;
    margin-right: 5px;
}

.drop select {
    appearance: none;
    width: 100%;
    height: 48px;
    padding: 0 10px;
    border: 2px solid #444444;
    border-radius: 6px;
    background-color: #383838;
    color: #f2f2f2;
    font: inherit;
    font-size: 25px;
}

.drop svg {
    position: absolute;
    right: 8px;
    top: 20px;
    pointer-events: none;
}

.drop-font {
    width: 197px;
}

.drop-size {
    width: 108px;
    margin-right: 11px;
}

.case {
    font-size: 26px;
}

.bold {
    font-weight: 700;
    font-size: 26px;
}

.italic {
    font-family: "Liberation Serif", serif;
    font-style: italic;
    font-size: 30px;
}

.strike {
    text-decoration: line-through;
}

.selected {
    width: 48px;
    margin: 0 -6px;
    border-radius: 6px;
    background-color: #4f4f4f;
}

.borders {
    color: #8a8a8a;
}

.style-group {
    flex: 1;
    padding: 2px 0 0 19px;
    display: flex;
}

.gallery {
    width: 871px;
    height: 115px;
    padding-left: 45px;
    display: flex;
    align-items: center;
    gap: 22px;
    border: 2px solid #484848;
    border-radius: 6px;
    background-color: #3d3d3d;
}

.card {
    width: 138px;
    height: 92px;
    display: flex;
    flex-direction: column;
    overflow: hidden;
    border-radius: 3px;
    background-color: #ffffff;
    color: #111111;
}

.current {
    box-shadow: 0 0 0 8px #6a6a6a, 0 0 0 10px #e2e2e2;
}

.preview {
    width: 126px;
    height: 60px;
    margin: 0 6px;
    padding-top: 3px;
    display: flex;
    align-items: center;
    overflow: hidden;
    font-family: "Liberation Sans", Arial, sans-serif;
    color: #242e34;
}

.p-normal {
    justify-content: center;
    font-size: 18px;
}

.p-month {
    align-items: flex-end;
    font-size: 160px;
    font-weight: 700;
    line-height: 136px;
}

.p-day {
    font-size: 26px;
    letter-spacing: 2px;
    color: #946424;
}

.p-date {
    font-size: 36px;
    font-weight: 700;
}

.card-name {
    width: 100%;
    height: 32px;
    line-height: 30px;
    font-size: 18px;
    font-weight: 400;
    text-align: center;
    background-color: #efefef;
}

.more {
    margin-left: 2px;
    color: #ffffff;
}

.styles-pane {
    margin: 8px 0 0 8px;
    width: 66px;
    line-height: 24px;
    font-size: 21px;
    font-weight: 500;
    color: #f0f0f0;
    text-align: center;
}

.styles-pane svg {
    margin: 0 0 6px 4px;
}

/* document */
.document {
    flex: 1;
    min-height: 0;
    display: flex;
    background-color: #262626;
}

.canvas {
    flex: 1;
    min-width: 0;
    padding-top: 25px;
    overflow: hidden;
}

.page {
    width: 1224px;
    min-height: 1584px;
    margin: 0 auto;
    padding: 91px 77px 0 71px;
    border: 2px solid #c8c8c8;
    font-family: "Liberation Sans", Arial, sans-serif;
    color: #d0d9df;
}

.page h1 {
    margin: 0 0 77px;
    font-size: 160px;
    line-height: 160px;
}

.page h1 span {
    color: #cfa171;
}

.calendar {
    position: relative;
}

.calendar table {
    width: 100%;
    table-layout: fixed;
    border-spacing: 0;
}

.calendar th {
    height: 70px;
    padding: 4px 0 0;
    border-bottom: 12px solid #d0d9df;
    vertical-align: top;
    text-align: left;
    font-size: 26px;
    line-height: 28px;
    font-weight: 400;
    letter-spacing: 2px;
    color: #cfa171;
}

.calendar td {
    height: 170px;
    padding: 5px 19px 0 0;
    border-bottom: 2px solid #d0d9df;
    vertical-align: top;
    text-align: right;
    font-size: 36px;
    line-height: 40px;
    font-weight: 700;
}

.calendar td:last-child,
.calendar td:first-child {
    color: #cfa171;
}

.calendar p {
    margin: 8px 0 0;
    text-align: left;
    font-size: 18px;
    line-height: 22px;
    font-weight: 400;
}

.handle {
    position: absolute;
    left: -25px;
    top: -21px;
    background-color: #ffffff;
    color: #222222;
}

.caret {
    position: absolute;
    right: -4px;
    top: 7px;
    width: 2px;
    height: 20px;
    background-color: #ffffff;
}

.vscroll {
    width: 30px;
    padding: 5px 6px;
    border-left: 2px solid #3c3c3c;
    background-color: #2e2e2e;
}

.thumb {
    height: 74%;
    border-radius: 8px;
    background-color: #6c6c6c;
}

.hscroll {
    flex: none;
    height: 31px;
    border-top: 2px solid #444444;
    background-color: #333333;
}

/* status bar */
.statusbar {
    flex: none;
    height: 46px;
    padding: 0 48px;
    display: flex;
    align-items: center;
    gap: 40px;
    border-top: 2px solid #000000;
    background: linear-gradient(#4a4a4a, #383838);
    font-size: 24px;
}

.view-tools {
    height: 100%;
    margin-left: auto;
    display: flex;
    align-items: center;
}

.focus {
    margin-right: 22px;
    display: flex;
    align-items: center;
    gap: 12px;
}

.view {
    width: 72px;
    height: 100%;
    display: flex;
    align-items: center;
    justify-content: center;
}

.on {
    background-color: #5c5c5c;
}

.step {
    width: 18px;
    margin: 0 14px;
}

.zoom-range {
    appearance: none;
    width: 200px;
    height: 32px;
    margin: 0;
    background: linear-gradient(#6e6e6e, #6e6e6e) center / 100% 8px no-repeat;
}

.zoom-range::-webkit-slider-thumb {
    appearance: none;
    width: 32px;
    height: 32px;
    border-radius: 50%;
    background-color: #9c9c9c;
}

.percent {
    margin-left: 18px;
}

/* dock */
.dock {
    flex: none;
    height: 125px;
    margin: 0 auto 11px;
    padding: 17px 19px 0 17px;
    display: flex;
    gap: 25px;
    border: 2px solid rgba(255, 255, 255, 0.18);
    border-radius: 38px;
    background: linear-gradient(90deg, #221237, #22123a 30%, #28104f 45%, #2b1052 62%, #491070 70%, #471069 76%, #2f1057 87%, #25104a);
}

.dock a {
    position: relative;
    width: 78px;
    height: 78px;
}

.dock svg {
    width: 100%;
    stroke: none;
}

.running::after {
    content: "";
    position: absolute;
    left: 35px;
    bottom: -26px;
    width: 8px;
    height: 8px;
    border-radius: 50%;
    background-color: #a58fc4;
}

.petals rect {
    mix-blend-mode: multiply;
}

.cal-month {
    font-size: 15px;
    font-weight: 600;
    text-anchor: middle;
    fill: #ffffff;
}

.cal-day {
    font-size: 46px;
    font-weight: 300;
    text-anchor: middle;
    fill: #222222;
}

.tv {
    font-size: 33px;
    font-weight: 500;
    fill: #ffffff;
}

.w {
    font-size: 24px;
    font-weight: 600;
    text-anchor: middle;
    fill: #ffffff;
}

.dock-line {
    width: 2px;
    height: 94px;
    margin: -4px 3px 0 11px;
    background-color: #5b4480;
}

.dock .folder {
    width: 88px;
}

.dock .trash {
    width: 68px;
    margin-top: -4px;
}
```
